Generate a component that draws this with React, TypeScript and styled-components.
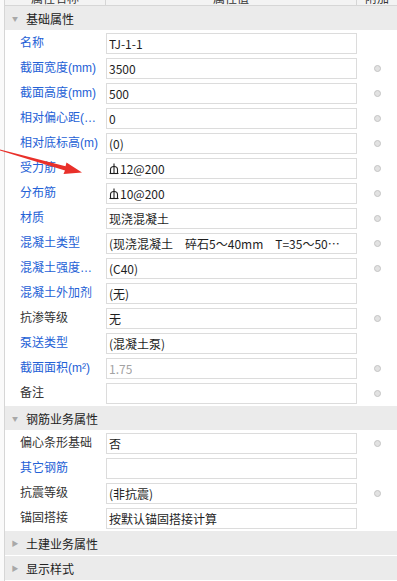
import styled, { createGlobalStyle } from "styled-components";

const GlobalStyle = createGlobalStyle`
    html, body {
        margin: 0;
        padding: 0;
        background: #ffffff;
        overflow: hidden;
    }
    body {
        font-family: "Noto Sans CJK SC", "Noto Sans", sans-serif;
        font-size: 12px;
        color: #222;
    }
`;

const Page = styled.div`
    position: relative;
    width: 397px;
    height: 581px;
    display: flex;
    overflow: hidden;
`;

const Gutter = styled.div`
    width: 4px;
    flex: none;
    border-right: 1px solid #d6d6d6;
    background: #fafafa;
`;

const Grid = styled.div`
    flex: 1;
    display: flex;
    flex-direction: column;
`;

const HeaderRow = styled.div`
    display: grid;
    grid-template-columns: 101px 251px 1fr;
    height: 7px;
    border-bottom: 1px solid #d6d6d6;
    background: #f3f3f3;
    overflow: hidden;
`;

const HeaderCell = styled.div<{ $last?: boolean }>`
    border-right: ${(p) => (p.$last ? "none" : "1px solid #d6d6d6")};
    text-align: center;
    overflow: hidden;
    color: #333;

    span {
        display: block;
        height: 22px;
        line-height: 22px;
        margin-top: -13px;
    }
`;

const GroupHeader = styled.div`
    height: 24px;
    border-bottom: 1px solid #ffffff;
    background: #ebebeb;
    display: flex;
    align-items: center;
    padding-left: 6px;
    color: #222;
`;

const Caret = styled.span<{ $open: boolean }>`
    width: 8px;
    display: inline-flex;
    justify-content: center;
    color: #a8a8a8;
    font-size: ${(p) => (p.$open ? "6px" : "7px")};
    margin-right: 7px;
`;

const Row = styled.div`
    display: grid;
    grid-template-columns: 101px 251px 1fr;
    height: 25px;
    align-items: center;
`;

const Label = styled.div<{ $blue: boolean }>`
    padding-left: 15px;
    padding-right: 4px;
    font-family: "Liberation Sans", "Noto Sans CJK SC", sans-serif;
    color: ${(p) => (p.$blue ? "#2461d6" : "#333333")};
    white-space: nowrap;
    overflow: hidden;
    text-overflow: ellipsis;
    line-height: 21px;
`;

const Value = styled.div<{ $muted: boolean }>`
    box-sizing: border-box;
    height: 21px;
    border: 1px solid #dcdcdc;
    background: #fff;
    padding: 0 6px 0 2px;
    line-height: 19px;
    color: ${(p) => (p.$muted ? "#a3a3a3" : "#1e1e1e")};
    white-space: nowrap;
    overflow: hidden;
    display: flex;
    align-items: center;

    > span {
        overflow: hidden;
        text-overflow: ellipsis;
    }
`;

const Extra = styled.div`
    display: flex;
    justify-content: center;
    align-items: center;
`;

const Dot = styled.span`
    width: 7px;
    height: 7px;
    border-radius: 50%;
    box-sizing: border-box;
    border: 1px solid #c4c4c4;
    background: #e2e2e2;
`;

const Arrow = styled.svg`
    position: absolute;
    left: 0;
    top: 0;
    pointer-events: none;
`;

const RebarIcon = () => (
    <svg width="10" height="12" viewBox="0 0 10 12" style={{ marginRight: 1, flex: "none" }}>
        <g stroke="#1e1e1e" strokeWidth="1.1" fill="none">
            <line x1="5" y1="0.5" x2="5" y2="10.5" />
            <path d="M1.5 10 V6.5 A3.5 3 0 0 1 8.5 6.5 V10" />
            <line x1="0.5" y1="10.5" x2="9.5" y2="10.5" />
        </g>
    </svg>
);

type Prop = {
    label: string;
    value: string;
    blue?: boolean;
    dot?: boolean;
    muted?: boolean;
    rebar?: boolean;
};

type Group = { title: string; open: boolean; rows: Prop[] };

const groups: Group[] = [
    {
        title: "基础属性",
        open: true,
        rows: [
            { label: "名称", value: "TJ-1-1", blue: true },
            { label: "截面宽度(mm)", value: "3500", blue: true, dot: true },
            { label: "截面高度(mm)", value: "500", blue: true, dot: true },
            { label: "相对偏心距(mm)", value: "0", blue: true, dot: true },
            { label: "相对底标高(m)", value: "(0)", blue: true, dot: true },
            { label: "受力筋", value: "12@200", blue: true, dot: true, rebar: true },
            { label: "分布筋", value: "10@200", blue: true, dot: true, rebar: true },
            { label: "材质", value: "现浇混凝土", blue: true, dot: true },
            {
                label: "混凝土类型",
                value: "(现浇混凝土　碎石5～40mm　T=35～50mm)",
                blue: true,
                dot: true,
            },
            { label: "混凝土强度等级", value: "(C40)", blue: true, dot: true },
            { label: "混凝土外加剂", value: "(无)", blue: true },
            { label: "抗渗等级", value: "无", dot: true },
            { label: "泵送类型", value: "(混凝土泵)", blue: true },
            { label: "截面面积(m²)", value: "1.75", blue: true, dot: true, muted: true },
            { label: "备注", value: "", dot: true },
        ],
    },
    {
        title: "钢筋业务属性",
        open: true,
        rows: [
            { label: "偏心条形基础", value: "否", dot: true },
            { label: "其它钢筋", value: "", blue: true },
            { label: "抗震等级", value: "(非抗震)", dot: true },
            { label: "锚固搭接", value: "按默认锚固搭接计算" },
        ],
    },
    { title: "土建业务属性", open: false, rows: [] },
    { title: "显示样式", open: false, rows: [] },
];

export default function App() {
    return (
        <Page>
            <GlobalStyle />
            <Gutter />
            <Grid>
                <HeaderRow>
                    <HeaderCell>
                        <span>属性名称</span>
                    </HeaderCell>
                    <HeaderCell>
                        <span>属性值</span>
                    </HeaderCell>
                    <HeaderCell $last>
                        <span>附加</span>
                    </HeaderCell>
                </HeaderRow>
                {groups.map((g) => (
                    <div key={g.title}>
                        <GroupHeader>
                            <Caret $open={g.open}>{g.open ? "▼" : "▶"}</Caret>
                            {g.title}
                        </GroupHeader>
                        {g.rows.map((r) => (
                            <Row key={r.label}>
                                <Label $blue={!!r.blue}>{r.label}</Label>
                                <Value $muted={!!r.muted}>
                                    {r.rebar && <RebarIcon />}
                                    <span>{r.value}</span>
                                </Value>
                                <Extra>{r.dot && <Dot />}</Extra>
                            </Row>
                        ))}
                    </div>
                ))}
            </Grid>
            <Arrow width="397" height="581" viewBox="0 0 397 581">
                <polygon
                    points="0,149.6 0,150.4 65,170.6 63.5,174 82,172.5 66.5,162.5 65.5,166.3"
                    fill="#e9302a"
                />
            </Arrow>
        </Page>
    );
}
